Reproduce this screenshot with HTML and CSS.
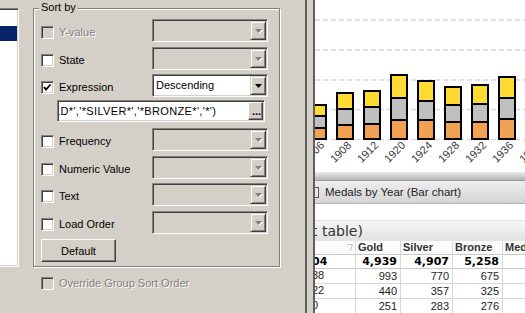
FILE: index.html
```html
<!DOCTYPE html>
<html lang="en">
<head>
    <meta charset="UTF-8">
    <title>Sort by</title>
    <link rel="stylesheet" href="styles.css">
</head>
<body>
<div class="app">

    <!-- Properties dialog (Sort tab) -->
    <div class="dialog">
        <div class="list"><div class="list-sel"></div></div>

        <div class="side">
            <div class="group">
                <span class="legend">Sort by</span>

                <div class="row">
                    <label class="opt off"><span class="box"></span>Y-value</label>
                    <div class="combo off"><span class="val"></span><span class="drop"><svg width="8" height="5"><polygon class="sh" points="1,1 8,1 4.5,5"/><polygon points="0,0 7,0 3.5,4"/></svg></span></div>
                </div>

                <div class="row">
                    <label class="opt"><span class="box"></span>State</label>
                    <div class="combo off"><span class="val"></span><span class="drop"><svg width="8" height="5"><polygon class="sh" points="1,1 8,1 4.5,5"/><polygon points="0,0 7,0 3.5,4"/></svg></span></div>
                </div>

                <div class="row gap4">
                    <label class="opt"><span class="box"><svg width="9" height="9"><polyline points="1,4 3,6.5 7.5,1.5"/></svg></span>Expression</label>
                    <div class="combo"><span class="val">Descending</span><span class="drop"><svg width="8" height="5"><polygon points="0,0 7,0 3.5,4"/></svg></span></div>
                </div>

                <div class="edit">
                    <span class="edit-text"><span class="scroll">LD*','*SILVER*','*BRONZE*','*')</span></span>
                    <span class="dots">...</span>
                </div>

                <div class="row gap6">
                    <label class="opt"><span class="box"></span>Frequency</label>
                    <div class="combo off"><span class="val"></span><span class="drop"><svg width="8" height="5"><polygon class="sh" points="1,1 8,1 4.5,5"/><polygon points="0,0 7,0 3.5,4"/></svg></span></div>
                </div>

                <div class="row">
                    <label class="opt"><span class="box"></span>Numeric Value</label>
                    <div class="combo off"><span class="val"></span><span class="drop"><svg width="8" height="5"><polygon class="sh" points="1,1 8,1 4.5,5"/><polygon points="0,0 7,0 3.5,4"/></svg></span></div>
                </div>

                <div class="row gap4">
                    <label class="opt"><span class="box"></span>Text</label>
                    <div class="combo off"><span class="val"></span><span class="drop"><svg width="8" height="5"><polygon class="sh" points="1,1 8,1 4.5,5"/><polygon points="0,0 7,0 3.5,4"/></svg></span></div>
                </div>

                <div class="row">
                    <label class="opt"><span class="box"></span>Load Order</label>
                    <div class="combo off"><span class="val"></span><span class="drop"><svg width="8" height="5"><polygon class="sh" points="1,1 8,1 4.5,5"/><polygon points="0,0 7,0 3.5,4"/></svg></span></div>
                </div>

                <button class="btn">Default</button>
            </div>

            <label class="opt off override"><span class="box"></span>Override Group Sort Order</label>
        </div>
    </div>

    <div class="splitter"></div>

    <!-- Sheet behind the dialog -->
    <div class="sheet">
        <svg class="chart" width="210" height="172" viewBox="0 0 210 172">
            <g class="grid-lines">
                <line x1="0" y1="20" x2="210" y2="20"/>
                <line x1="0" y1="50" x2="210" y2="50"/>
                <line x1="0" y1="80" x2="210" y2="80"/>
                <line x1="0" y1="109.5" x2="210" y2="109.5"/>
                <line x1="0" y1="139.5" x2="210" y2="139.5"/>
            </g>
            <g class="bars">
                <rect class="gold" x="-5" y="105" width="16" height="11"/><rect class="silver" x="-5" y="116" width="16" height="12"/><rect class="bronze" x="-5" y="128" width="16" height="11"/>
                <rect class="gold" x="22" y="93" width="16" height="16"/><rect class="silver" x="22" y="109" width="16" height="16"/><rect class="bronze" x="22" y="125" width="16" height="14"/>
                <rect class="gold" x="49" y="91" width="16" height="16"/><rect class="silver" x="49" y="107" width="16" height="17"/><rect class="bronze" x="49" y="124" width="16" height="15"/>
                <rect class="gold" x="76" y="75" width="16" height="23"/><rect class="silver" x="76" y="98" width="16" height="22"/><rect class="bronze" x="76" y="120" width="16" height="19"/>
                <rect class="gold" x="103" y="81" width="16" height="20"/><rect class="silver" x="103" y="101" width="16" height="19"/><rect class="bronze" x="103" y="120" width="16" height="19"/>
                <rect class="gold" x="130" y="87" width="16" height="18"/><rect class="silver" x="130" y="105" width="16" height="17"/><rect class="bronze" x="130" y="122" width="16" height="17"/>
                <rect class="gold" x="157" y="85" width="16" height="19"/><rect class="silver" x="157" y="104" width="16" height="18"/><rect class="bronze" x="157" y="122" width="16" height="17"/>
                <rect class="gold" x="184" y="77" width="16" height="21"/><rect class="silver" x="184" y="98" width="16" height="21"/><rect class="bronze" x="184" y="119" width="16" height="20"/>
            </g>
            <g class="years">
                <text x="10" y="146" transform="rotate(-45 10 146)">1906</text>
                <text x="37" y="146" transform="rotate(-45 37 146)">1908</text>
                <text x="64" y="146" transform="rotate(-45 64 146)">1912</text>
                <text x="91" y="146" transform="rotate(-45 91 146)">1920</text>
                <text x="118" y="146" transform="rotate(-45 118 146)">1924</text>
                <text x="145" y="146" transform="rotate(-45 145 146)">1928</text>
                <text x="172" y="146" transform="rotate(-45 172 146)">1932</text>
                <text x="199" y="146" transform="rotate(-45 199 146)">1936</text>
                <text x="226" y="146" transform="rotate(-45 226 146)">1948</text>
            </g>
        </svg>
        <div class="chart-foot"></div>
        <div class="caption"><span class="cap-icon"></span>Medals by Year (Bar chart)</div>
        <div class="spacer"></div>
        <div class="tcaption"><span class="clip">t table)</span></div>

        <div class="table">
            <div class="cell head first"><svg class="sort" width="6" height="8"><polyline points="0.5,0.5 5.5,0.5 3,7"/></svg></div>
            <div class="cell head">Gold</div>
            <div class="cell head">Silver</div>
            <div class="cell head">Bronze</div>
            <div class="cell head">Med</div>

            <div class="cell total first"><span class="clip">04</span></div>
            <div class="cell total num">4,939</div>
            <div class="cell total num">4,907</div>
            <div class="cell total num">5,258</div>
            <div class="cell total"></div>

            <div class="cell first"><span class="clip">38</span></div>
            <div class="cell num">993</div>
            <div class="cell num">770</div>
            <div class="cell num">675</div>
            <div class="cell"></div>

            <div class="cell first"><span class="clip">22</span></div>
            <div class="cell num">440</div>
            <div class="cell num">357</div>
            <div class="cell num">325</div>
            <div class="cell"></div>

            <div class="cell first"><span class="clip">0</span></div>
            <div class="cell num">251</div>
            <div class="cell num">283</div>
            <div class="cell num">276</div>
            <div class="cell"></div>
        </div>
    </div>

</div>
</body>
</html>
```

FILE: styles.css
```css
body {
    margin: 0;
    font-family: "Liberation Sans", Arial, sans-serif;
    font-size: 11px;
    color: #000;
    background: #d4d0c8;
}

.app {
    display: flex;
    width: 525px;
    height: 313px;
    overflow: hidden;
}

/* ---- dialog ---- */

.dialog {
    display: flex;
    width: 305px;
    flex: none;
    background: #d4d0c8;
}

.list {
    box-sizing: border-box;
    width: 19px;
    height: 259px;
    margin-top: 8px;
    padding-top: 17px;
    background: #fff;
    border-top: 1px solid #808080;
    border-right: 1px solid #fff;
    border-bottom: 1px solid #fff;
    box-shadow: inset 0 1px #404040, inset -1px -1px #d4d0c8;
}

.list-sel {
    height: 15px;
    margin-right: 1px;
    background: #0a246a;
}

.side {
    display: flex;
    flex-direction: column;
    margin-left: 14px;
}

.group {
    position: relative;
    box-sizing: border-box;
    width: 247px;
    height: 259px;
    margin-top: 8px;
    padding: 10px 0 0 7px;
    border: 1px solid #808080;
    box-shadow: inset 1px 1px #fff, 1px 1px #fff;
}

.legend {
    position: absolute;
    top: -8px;
    left: 5px;
    padding: 0 2px;
    line-height: 13px;
    background: #d4d0c8;
}

.row {
    display: flex;
    height: 23px;
    margin-top: 5px;
}

.row:first-of-type {
    margin-top: 0;
}

.row.gap4 { margin-top: 4px; }
.row.gap6 { margin-top: 6px; }

.opt {
    display: flex;
    align-items: center;
    gap: 5px;
    width: 111px;
    height: 13px;
    margin-top: 7px;
    line-height: 13px;
    white-space: nowrap;
}

.opt.off {
    color: #808080;
    text-shadow: 1px 1px #fff;
}

.box {
    box-sizing: border-box;
    display: flex;
    align-items: center;
    justify-content: center;
    width: 13px;
    height: 13px;
    flex: none;
    background: #fff;
    border: 1px solid;
    border-color: #808080 #fff #fff #808080;
    box-shadow: inset 1px 1px #404040, inset -1px -1px #d4d0c8;
}

.opt.off .box {
    background: #d4d0c8;
}

.box polyline {
    fill: none;
    stroke: #000;
    stroke-width: 1.8;
}

.combo {
    box-sizing: border-box;
    display: flex;
    width: 116px;
    height: 23px;
    padding: 1px;
    background: #fff;
    border: 1px solid;
    border-color: #808080 #fff #fff #808080;
    box-shadow: inset 1px 1px #404040, inset -1px -1px #d4d0c8;
}

.combo.off {
    background: #d4d0c8;
}

.val {
    flex: 1;
    padding-left: 2px;
    line-height: 19px;
}

.drop {
    box-sizing: border-box;
    display: flex;
    align-items: center;
    justify-content: center;
    width: 16px;
    height: 19px;
    padding: 1px 0 0 1px;
    background: #d4d0c8;
    border: 1px solid;
    border-color: #d4d0c8 #404040 #404040 #d4d0c8;
    box-shadow: inset 1px 1px #fff, inset -1px -1px #808080;
}

.drop polygon { fill: #000; }
.off .drop polygon { fill: #808080; }
.off .drop polygon.sh { fill: #fff; }

.edit {
    box-sizing: border-box;
    display: flex;
    width: 208px;
    height: 22px;
    margin: 3px 0 0 16px;
    padding: 1px;
    background: #fff;
    border: 1px solid;
    border-color: #808080 #fff #fff #808080;
    box-shadow: inset 1px 1px #404040, inset -1px -1px #d4d0c8;
}

.edit-text {
    flex: 1;
    overflow: hidden;
    white-space: nowrap;
    line-height: 18px;
    letter-spacing: 0.35px;
}

.scroll {
    margin-left: -5px;
}

.dots {
    box-sizing: border-box;
    width: 15px;
    height: 18px;
    flex: none;
    padding-left: 3px;
    font-weight: bold;
    line-height: 16px;
    background: #d4d0c8;
    border: 1px solid;
    border-color: #fff #404040 #404040 #fff;
    box-shadow: inset -1px -1px #808080;
}

.btn {
    box-sizing: border-box;
    width: 75px;
    height: 23px;
    margin-top: 5px;
    padding: 0;
    font: inherit;
    color: #000;
    background: #d4d0c8;
    border: 1px solid;
    border-color: #fff #404040 #404040 #fff;
    box-shadow: inset -1px -1px #808080;
}

.override {
    margin: 10px 0 0 8px;
    width: auto;
}

.splitter {
    width: 6px;
    flex: none;
    background: #d4d0c8;
    border-left: 2px solid #5e5e5e;
    border-right: 2px solid #5e5e5e;
}

/* ---- sheet ---- */

.sheet {
    flex: 1;
    overflow: hidden;
    background: #fff;
}

.chart {
    display: block;
}

.grid-lines line {
    stroke: #dadada;
    stroke-width: 1.5;
    stroke-dasharray: 5 3;
}

.bars rect {
    stroke: #000;
    stroke-width: 2;
}

.bars .gold { fill: #fddb32; }
.bars .silver { fill: #c0c0c0; }
.bars .bronze { fill: #f2a052; }

.years text {
    font-family: "Liberation Sans", Arial, sans-serif;
    font-size: 11px;
    fill: #3a3a3a;
    text-anchor: end;
}

.chart-foot {
    height: 8px;
    background: linear-gradient(#ececec, #b4b4b4);
    border-bottom: 1px solid #9a9a9a;
}

.caption {
    display: flex;
    align-items: center;
    height: 22px;
    font-size: 11.5px;
    color: #222;
    background: linear-gradient(#eeeeee, #d4d4d4);
    border-bottom: 1px solid #b4b4b4;
}

.cap-icon {
    box-sizing: border-box;
    width: 4px;
    height: 11px;
    margin-right: 6px;
    background: #e8e8e8;
    border: 1px solid #555;
    border-left: none;
}

.spacer {
    height: 16px;
}

.tcaption {
    height: 20px;
    overflow: hidden;
    font-family: "DejaVu Sans", sans-serif;
    font-size: 14px;
    line-height: 20px;
    color: #333;
    white-space: nowrap;
    background: linear-gradient(#f6f6f6, #e2e2e2);
    border-top: 1px solid #e4e4e4;
}

.clip {
    display: inline-block;
    margin-left: -3px;
}

.table {
    display: grid;
    grid-template-columns: 41px 45px 52px 50px 50px;
    grid-template-rows: 14px 14px 15px 15px 15px;
}

.cell {
    box-sizing: border-box;
    overflow: hidden;
    white-space: nowrap;
    padding: 0 3px 0 2px;
    line-height: 13px;
    color: #222;
    border-right: 1px solid #d8d8d8;
    border-bottom: 1px solid #d8d8d8;
}

.cell.first {
    padding-left: 0;
}

.cell.head {
    font-weight: bold;
    color: #333;
    background: #fbfbfb;
    border-bottom-color: #c8c8c8;
}

.cell.head.first {
    display: flex;
    justify-content: flex-end;
    align-items: center;
    padding-right: 2px;
}

.sort polyline {
    fill: none;
    stroke: #c4c4c4;
    stroke-width: 1;
}

.cell.total {
    font-family: "DejaVu Sans", sans-serif;
    font-weight: bold;
    font-size: 11px;
    color: #000;
    border-bottom-color: #c8c8c8;
}

.cell.num {
    text-align: right;
    line-height: 14px;
}
```
